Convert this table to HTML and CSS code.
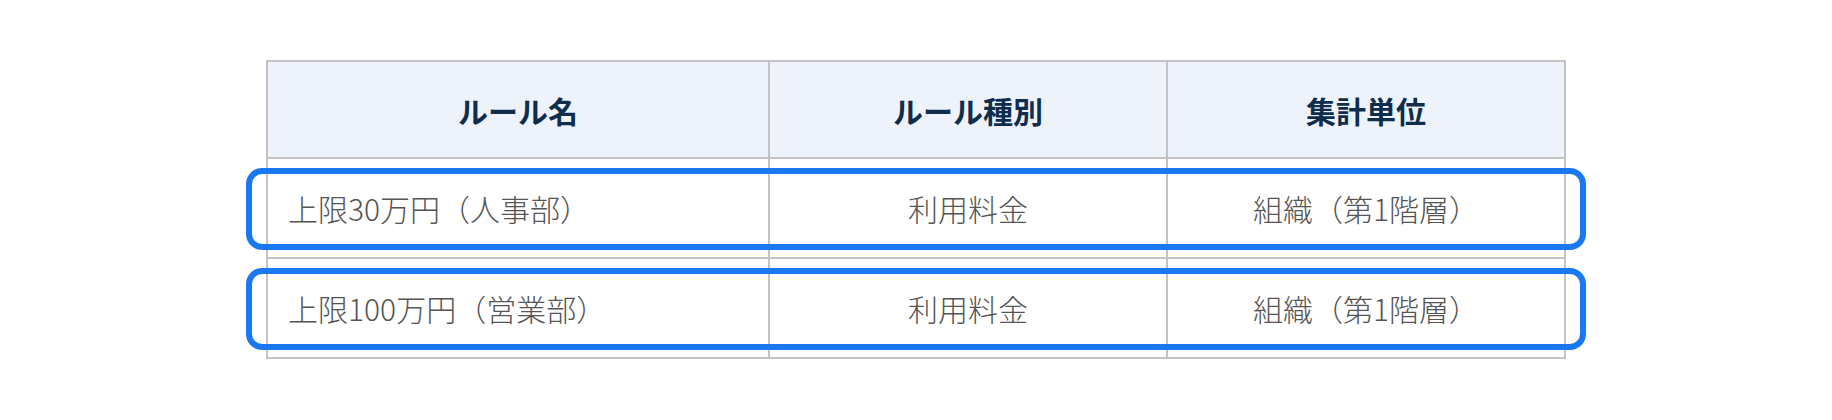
FILE: index.html
```html
<!DOCTYPE html>
<html lang="ja">
<head>
<meta charset="utf-8">
<link rel="stylesheet" href="styles.css">
</head>
<body>
<div class="table">
  <div class="row head">
    <div class="cell">ルール名</div>
    <div class="cell">ルール種別</div>
    <div class="cell">集計単位</div>
  </div>
  <div class="row body marked">
    <div class="cell left">上限30万円（人事部）</div>
    <div class="cell">利用料金</div>
    <div class="cell">組織（第1階層）</div>
  </div>
  <div class="row body marked">
    <div class="cell left">上限100万円（営業部）</div>
    <div class="cell">利用料金</div>
    <div class="cell">組織（第1階層）</div>
  </div>
</div>
</body>
</html>
```
FILE: styles.css
```css
* { box-sizing: border-box; }
html, body { margin: 0; padding: 0; background: #ffffff; }
body {
  font-family: "Noto Sans CJK JP", "Noto Sans", sans-serif;
}
.table {
  width: 1300px;
  margin: 60px auto 0;
  border: 2px solid #c3c3c3;
  border-bottom: none;
}
.row {
  display: grid;
  grid-template-columns: 502px 398px 396px;
  border-bottom: 2px solid #c3c3c3;
}
.cell {
  display: flex;
  align-items: center;
  justify-content: center;
  border-right: 2px solid #c3c3c3;
}
.cell:last-child { border-right: none; }
.head { height: 97px; background: #eef3fb; }
.head .cell {
  font-size: 30px;
  font-weight: 700;
  color: #0f2d4c;
}
.body { height: 100px; }
.body .cell {
  font-size: 30px;
  font-weight: 300;
  color: #555555;
}
.num { letter-spacing: 1px; }
.body .cell.left {
  justify-content: flex-start;
  padding-left: 20px;
}
.marked { position: relative; }
.marked::after {
  content: "";
  position: absolute;
  top: 9px;
  bottom: 7px;
  left: -22px;
  right: -22px;
  border: 6px solid #1a78f2;
  border-radius: 16px;
  pointer-events: none;
}
```
